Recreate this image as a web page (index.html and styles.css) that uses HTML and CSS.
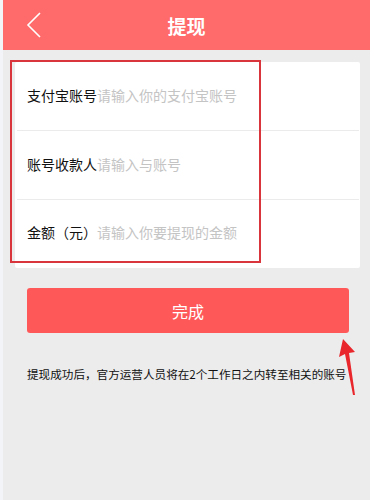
FILE: index.html
```html
<!DOCTYPE html>
<html lang="zh-CN">
<head>
<meta charset="utf-8">
<title>提现</title>
<link rel="stylesheet" href="styles.css">
</head>
<body>
<div class="screen">
  <header class="topbar">
    <svg class="back" width="16" height="26" viewBox="0 0 16 26"><polyline points="14,1 2,13 14,25" fill="none" stroke="#fff" stroke-width="1.6"/></svg>
    <h1 class="title">提现</h1>
  </header>
  <main class="content">
    <section class="card">
      <div class="row"><span class="label">支付宝账号</span><span class="ph">请输入你的支付宝账号</span></div>
      <div class="row"><span class="label">账号收款人</span><span class="ph">请输入与账号</span></div>
      <div class="row"><span class="label">金额（元）</span><span class="ph">请输入你要提现的金额</span></div>
      <div class="highlight"></div>
    </section>
    <button class="submit">完成</button>
    <p class="note">提现成功后，官方运营人员将在2个工作日之内转至相关的账号</p>
  </main>
  <svg class="arrow" width="24" height="62" viewBox="0 0 24 62"><polygon points="7,2 3,20 9,17 17,58 19,58 13,16 19,15" fill="#e8262b"/></svg>
</div>
</body>
</html>
```
FILE: styles.css
```css
html, body { margin: 0; padding: 0; }
body {
  background: #fff;
  font-family: "Noto Sans CJK SC", "Noto Sans", sans-serif;
  width: 374px;
  height: 500px;
  overflow: hidden;
}
.screen {
  position: relative;
  margin-left: 3px;
  width: 367px;
  height: 500px;
  background: #ececec;
  box-shadow: -3px 0 0 #f3f4f7;
}
.topbar {
  height: 50px;
  background: #ff6a6a;
  display: flex;
  align-items: center;
  justify-content: center;
  position: relative;
}
.back {
  position: absolute;
  left: 23px;
  top: 12px;
}
.title {
  margin: 0;
  color: #fff;
  font-size: 19px;
  font-weight: 700;
  padding-top: 1px;
}
.content {
  padding: 12px 10px 0 12px;
}
.card {
  position: relative;
  background: #fff;
  border-radius: 2px;
}
.row {
  height: 69px;
  display: flex;
  align-items: center;
  padding-left: 10px;
  font-size: 14px;
  border-bottom: 1px solid #ebebeb;
  margin-left: 2px;
  margin-right: 1px;
  padding-bottom: 2px;
  box-sizing: border-box;
}
.row:nth-child(3) { border-bottom: none; height: 68px; padding-bottom: 4px; }
.label { color: #111; width: 70px; flex: none; }
.ph { color: #c4c4c4; }
.highlight {
  position: absolute;
  left: -5px;
  top: -2px;
  width: 247px;
  height: 199px;
  border: 2px solid #d8363c;
}
.submit {
  display: block;
  margin: 20px 0 0 12px;
  width: 322px;
  height: 45px;
  border: none;
  border-radius: 3px;
  background: #ff5859;
  color: #fff;
  font-family: inherit;
  font-size: 16px;
}
.note {
  margin: 33px 0 0 12px;
  font-size: 11.6px;
  color: #111;
  white-space: nowrap;
}
.arrow {
  position: absolute;
  left: 333px;
  top: 337px;
}
```
